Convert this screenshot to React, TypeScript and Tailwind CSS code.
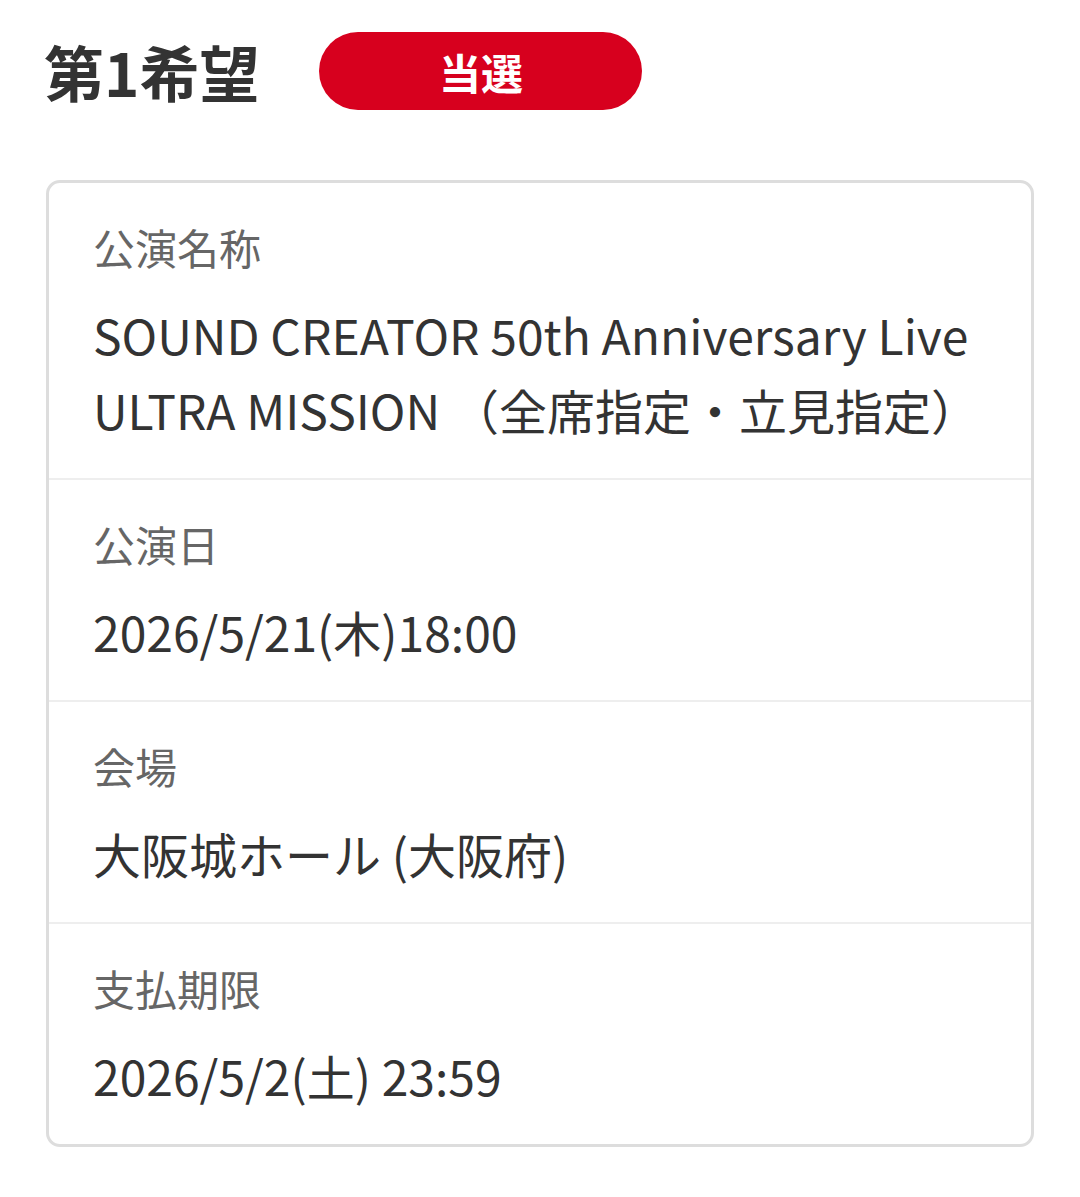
const rows = [
  {
    label: "公演名称",
    value: "SOUND CREATOR 50th Anniversary Live ULTRA MISSION （全席指定・立見指定）",
  },
  { label: "公演日", value: "2026/5/21(木)18:00" },
  { label: "会場", value: "大阪城ホール (大阪府)" },
  { label: "支払期限", value: "2026/5/2(土) 23:59" },
];

export default function App() {
  return (
    <div
      className="min-h-screen bg-white px-[46px] pt-[32px] text-[#333]"
      style={{ fontFamily: '"Noto Sans CJK JP", "Noto Sans", sans-serif' }}
    >
      <div className="flex items-center">
        <h2 className="-ml-[2px] text-[60px] font-bold leading-[78px] text-[#333]">第1希望</h2>
        <span className="ml-[60px] flex h-[78px] w-[323px] items-center justify-center rounded-full bg-[#d7001e] text-[42px] font-bold text-white">
          当選
        </span>
      </div>

      <div className="mt-[70px] overflow-hidden rounded-[14px] border-[3px] border-[#dddddd]">
        {rows.map((row, i) => (
          <div
            key={row.label}
            className={`px-[44px] pt-[32px] pb-[31px] ${i < rows.length - 1 ? "border-b-2 border-[#eeeeee]" : ""}`}
          >
            <div className="text-[42px] leading-[64px] text-[#666]">{row.label}</div>
            <div className="mt-[18px] text-[48px] leading-[75px] text-[#333]">{row.value}</div>
          </div>
        ))}
      </div>
    </div>
  );
}
